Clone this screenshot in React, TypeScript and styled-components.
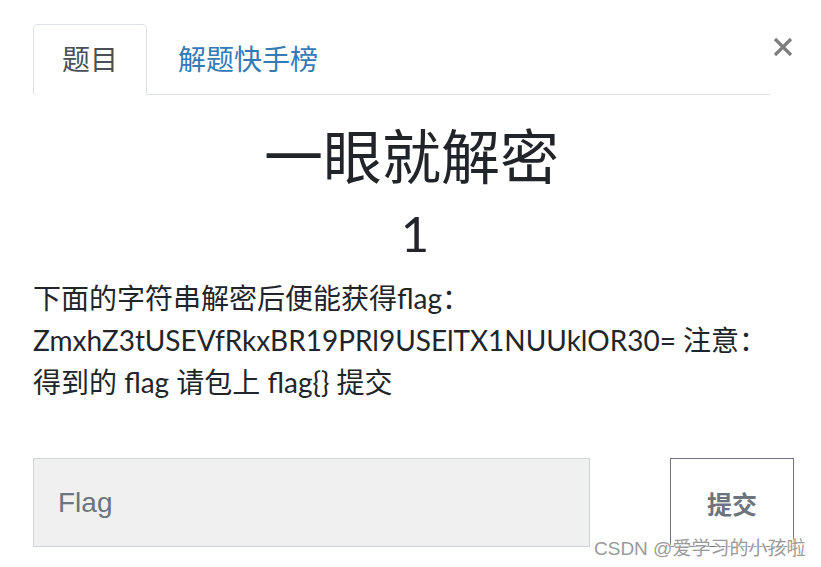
import React from "react";
import styled, { createGlobalStyle } from "styled-components";

const Global = createGlobalStyle`
  html, body { margin: 0; padding: 0; background: #fff; }
  body { font-family: Lato, "Noto Sans CJK SC", sans-serif; color: #212529; }
  * { box-sizing: border-box; }
`;

const Page = styled.div`
  position: relative;
  width: 821px;
  height: 567px;
  padding: 24px 0 0 33px;
  overflow: hidden;
`;

const Header = styled.div`
  display: flex;
  align-items: flex-start;
`;

const Tabs = styled.ul`
  display: flex;
  width: 737px;
  margin: 0;
  padding: 0;
  list-style: none;
  border-bottom: 1px solid #dee2e6;
`;

const Tab = styled.li<{ $active?: boolean }>`
  height: 71px;
  margin-bottom: -1px;
  padding: 0 ${(p) => (p.$active ? 28 : 30)}px;
  font-size: 28px;
  line-height: 69px;
  font-family: Lato, "Noto Sans CJK SC", sans-serif;
  color: ${(p) => (p.$active ? "#495057" : "#337ab7")};
  background: ${(p) => (p.$active ? "#fff" : "transparent")};
  border: 1px solid ${(p) => (p.$active ? "#dee2e6" : "transparent")};
  border-bottom-color: ${(p) => (p.$active ? "#fff" : "transparent")};
  border-radius: 5px 5px 0 0;
`;

const Close = styled.button`
  margin: 11px 0 0 1px;
  padding: 0;
  width: 24px;
  height: 24px;
  border: 0;
  background: none;
  display: flex;
  align-items: center;
  justify-content: center;
`;

const Title = styled.h1`
  margin: 27px 0 0;
  width: 757px;
  text-align: center;
  font-size: 59px;
  line-height: 70px;
  font-weight: 400;
  font-family: Lato, "Noto Sans CJK SC", sans-serif;
`;

const Score = styled.div`
  margin-top: 12px;
  width: 764px;
  text-align: center;
  font-size: 49px;
  line-height: 59px;
`;

const Desc = styled.p`
  margin: 14px 0 0;
  width: 737px;
  font-size: 28px;
  line-height: 42px;
`;

const FormRow = styled.div`
  display: flex;
  justify-content: space-between;
  width: 761px;
  margin-top: 55px;
`;

const FlagInput = styled.input`
  width: 557px;
  height: 89px;
  padding: 0 24px;
  font-family: "Liberation Sans", Arial, sans-serif;
  font-size: 28px;
  background: #f0f0f0;
  border: 1px solid #ced4da;
  border-radius: 0;
  color: #495057;
  outline: none;
  &::placeholder { color: #6c757d; }
`;

const Submit = styled.button`
  width: 124px;
  height: 89px;
  background: #fff;
  border: 1px solid #6c757d;
  border-radius: 0;
  font-family: "Noto Sans CJK SC", sans-serif;
  font-weight: 700;
  font-size: 25px;
  color: #6c757d;
`;

const Watermark = styled.div`
  position: absolute;
  left: 594px;
  top: 535px;
  font-family: "Liberation Sans", "Noto Sans CJK SC", sans-serif;
  font-size: 19px;
  line-height: 28px;
  color: #9a9a9a;
  text-shadow: 0 0 2px #fff, 0 0 2px #fff, 0 0 3px #fff;
  white-space: nowrap;
`;

export default function App() {
  return (
    <Page>
      <Global />
      <Header>
        <Tabs>
          <Tab $active>题目</Tab>
          <Tab>解题快手榜</Tab>
        </Tabs>
        <Close aria-label="close">
          <svg width="20" height="20" viewBox="0 0 20 20">
            <path d="M2 2 L18 18 M18 2 L2 18" stroke="#7f7f7f" strokeWidth="3.2" strokeLinecap="butt" />
          </svg>
        </Close>
      </Header>
      <Title>一眼就解密</Title>
      <Score>1</Score>
      <Desc>
        下面的字符串解密后便能获得flag：ZmxhZ3tUSEVfRkxBR19PRl9USElTX1NUUklOR30= 注意：得到的 flag 请包上 flag{"{}"} 提交
      </Desc>
      <FormRow>
        <FlagInput placeholder="Flag" />
        <Submit>提交</Submit>
      </FormRow>
      <Watermark>CSDN @爱学习的小孩啦</Watermark>
    </Page>
  );
}
